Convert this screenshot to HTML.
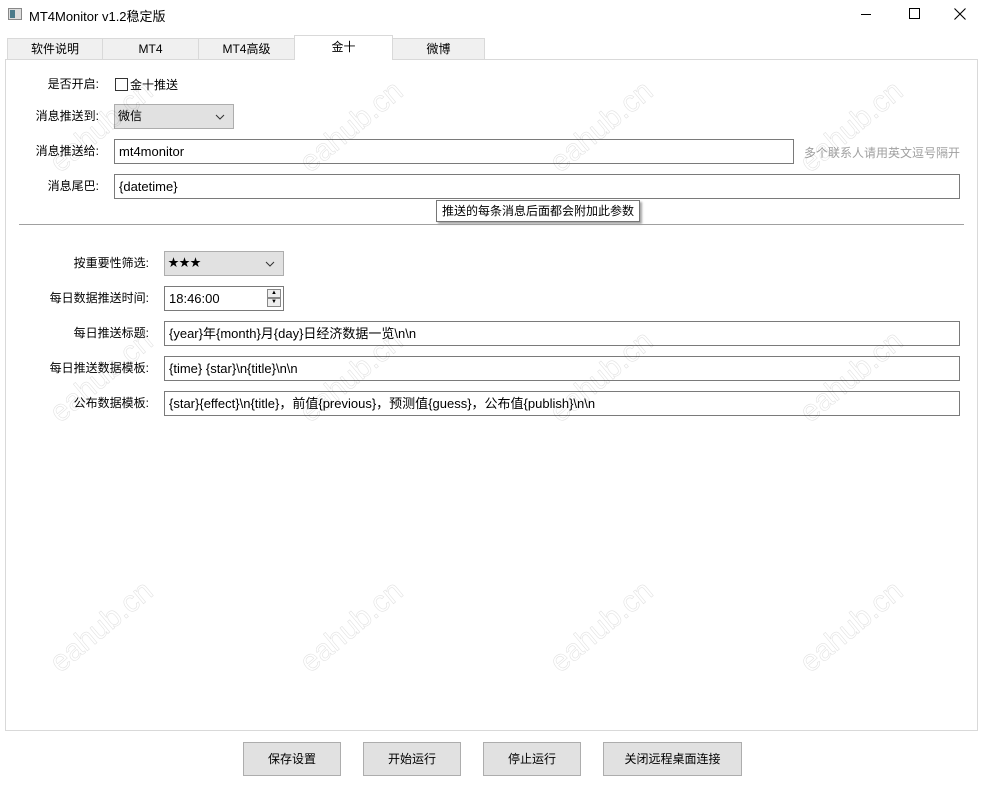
<!DOCTYPE html>
<html><head><meta charset="utf-8"><style>
*{margin:0;padding:0;box-sizing:border-box}
body{width:984px;height:791px;background:#fff;position:relative;overflow:hidden;font-family:"Liberation Sans","Microsoft YaHei","Noto Sans CJK SC",sans-serif;font-size:12px;color:#000}
.a{position:absolute}
.tab{position:absolute;top:38px;height:21px;background:#f0f0f0;border:1px solid #d9d9d9;border-bottom:none;text-align:center;line-height:20px;font-size:12px}
.lbl{position:absolute;text-align:right;line-height:24px;height:24px}
.inp{position:absolute;height:25px;border:1px solid #7a7a7a;background:#fff;padding-left:4px;line-height:23px;font-size:13px}
.cmb{position:absolute;height:25px;border:1px solid #adadad;background:#e1e1e1;padding-left:3px;line-height:23px;font-size:13px}
.cmb svg{position:absolute;right:8px;top:9px}
.btn{position:absolute;top:742px;height:34px;border:1px solid #adadad;background:#e1e1e1;text-align:center;line-height:32px}
.wm{position:absolute;color:transparent;-webkit-text-stroke:0.6px rgba(0,0,0,0.12);font-size:30px;transform:rotate(-40deg);font-family:"Liberation Sans",sans-serif;white-space:nowrap}
</style></head><body>
<div class="a" style="left:8px;top:8px;width:14px;height:12px;border:1px solid #888;background:#ddd"><div style="position:absolute;left:1px;top:1px;width:5px;height:8px;background:#4a7a8a"></div></div>
<div class="a" style="left:29px;top:6px;font-size:13px">MT4Monitor v1.2稳定版</div>
<div class="a" style="left:861px;top:14px;width:10px;height:1px;background:#000"></div>
<div class="a" style="left:909px;top:8px;width:11px;height:11px;border:1px solid #000"></div>
<svg class="a" style="left:954px;top:8px" width="12" height="12"><path d="M0.5 0.5L11.5 11.5M11.5 0.5L0.5 11.5" stroke="#000" stroke-width="1.1"/></svg>

<div class="a" style="left:5px;top:59px;width:973px;height:672px;border:1px solid #d9d9d9"></div>
<div class="tab" style="left:7px;width:96px">软件说明</div>
<div class="tab" style="left:102px;width:97px">MT4</div>
<div class="tab" style="left:198px;width:97px">MT4高级</div>
<div class="tab" style="left:392px;width:93px">微博</div>
<div class="tab" style="left:294px;top:35px;height:25px;width:99px;background:#fff;line-height:22px">金十</div>

<div class="lbl" style="left:10px;width:89px;top:72px">是否开启:</div>
<div class="a" style="left:115px;top:78px;width:13px;height:13px;border:1px solid #333;background:#fff"></div>
<div class="a" style="left:130px;top:77px;line-height:16px">金十推送</div>
<div class="lbl" style="left:10px;width:89px;top:104px">消息推送到:</div>
<div class="cmb" style="left:114px;top:104px;width:120px;font-size:12px">微信<svg width="10" height="6"><path d="M1 1L5 5L9 1" stroke="#333" fill="none"/></svg></div>
<div class="lbl" style="left:10px;width:89px;top:139px">消息推送给:</div>
<div class="inp" style="left:114px;top:139px;width:680px">mt4monitor</div>
<div class="a" style="left:804px;top:144px;color:#a0a0a0">多个联系人请用英文逗号隔开</div>
<div class="lbl" style="left:10px;width:89px;top:174px">消息尾巴:</div>
<div class="inp" style="left:114px;top:174px;width:846px">{datetime}</div>
<div class="a" style="left:436px;top:200px;width:204px;height:22px;border:1px solid #767676;background:#fff;line-height:20px;padding-left:5px;box-shadow:2px 2px 2px rgba(0,0,0,0.35)">推送的每条消息后面都会附加此参数</div>
<div class="a" style="left:19px;top:224px;width:945px;height:1px;background:#a0a0a0"></div>

<div class="lbl" style="left:10px;width:139px;top:251px">按重要性筛选:</div>
<div class="cmb" style="left:164px;top:251px;width:120px;font-size:11px">★★★<svg width="10" height="6"><path d="M1 1L5 5L9 1" stroke="#333" fill="none"/></svg></div>
<div class="lbl" style="left:10px;width:139px;top:286px">每日数据推送时间:</div>
<div class="inp" style="left:164px;top:286px;width:120px">18:46:00</div>
<div class="a" style="left:267px;top:289px;width:14px;height:9px;border:1px solid #888;background:#eee;font-size:6px;text-align:center;line-height:7px">▲</div>
<div class="a" style="left:267px;top:298px;width:14px;height:9px;border:1px solid #888;background:#eee;font-size:6px;text-align:center;line-height:7px">▼</div>
<div class="lbl" style="left:10px;width:139px;top:321px">每日推送标题:</div>
<div class="inp" style="left:164px;top:321px;width:796px">{year}年{month}月{day}日经济数据一览\n\n</div>
<div class="lbl" style="left:10px;width:139px;top:356px">每日推送数据模板:</div>
<div class="inp" style="left:164px;top:356px;width:796px">{time} {star}\n{title}\n\n</div>
<div class="lbl" style="left:10px;width:139px;top:391px">公布数据模板:</div>
<div class="inp" style="left:164px;top:391px;width:796px">{star}{effect}\n{title}，前值{previous}，预测值{guess}，公布值{publish}\n\n</div>

<div class="wm" style="left:40px;top:110px">eahub.cn</div>
<div class="wm" style="left:290px;top:110px">eahub.cn</div>
<div class="wm" style="left:540px;top:110px">eahub.cn</div>
<div class="wm" style="left:790px;top:110px">eahub.cn</div>
<div class="wm" style="left:40px;top:360px">eahub.cn</div>
<div class="wm" style="left:290px;top:360px">eahub.cn</div>
<div class="wm" style="left:540px;top:360px">eahub.cn</div>
<div class="wm" style="left:790px;top:360px">eahub.cn</div>
<div class="wm" style="left:40px;top:610px">eahub.cn</div>
<div class="wm" style="left:290px;top:610px">eahub.cn</div>
<div class="wm" style="left:540px;top:610px">eahub.cn</div>
<div class="wm" style="left:790px;top:610px">eahub.cn</div>

<div class="btn" style="left:243px;width:98px">保存设置</div>
<div class="btn" style="left:363px;width:98px">开始运行</div>
<div class="btn" style="left:483px;width:98px">停止运行</div>
<div class="btn" style="left:603px;width:139px">关闭远程桌面连接</div>
</body></html>
